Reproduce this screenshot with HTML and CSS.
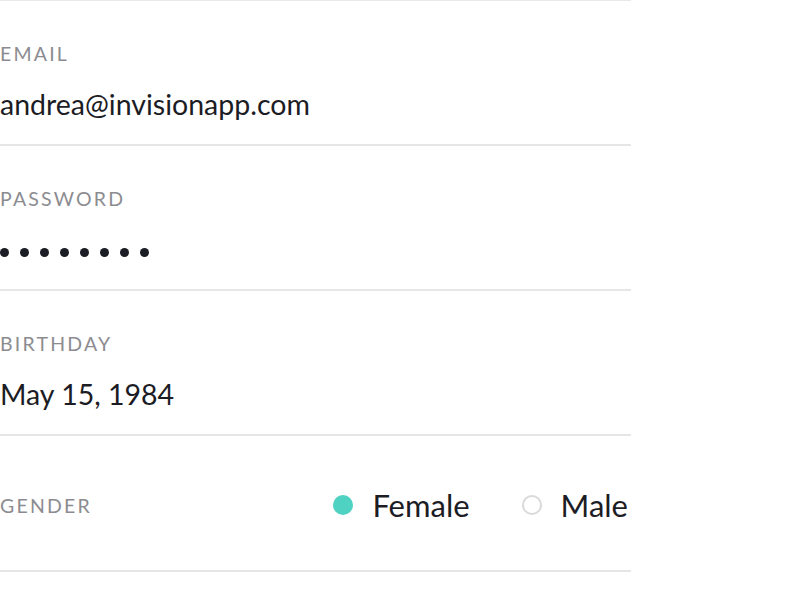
FILE: index.html
```html
<!DOCTYPE html>
<html>
<head>
<meta charset="utf-8">
<link rel="stylesheet" href="styles.css">
</head>
<body>
<div class="form">
  <div class="field">
    <div class="label">EMAIL</div>
    <div class="value">andrea@invisionapp.com</div>
  </div>
  <div class="field">
    <div class="label">PASSWORD</div>
    <div class="dots">
      <span class="dot"></span><span class="dot"></span><span class="dot"></span><span class="dot"></span>
      <span class="dot"></span><span class="dot"></span><span class="dot"></span><span class="dot"></span>
    </div>
  </div>
  <div class="field">
    <div class="label">BIRTHDAY</div>
    <div class="value">May 15, 1984</div>
  </div>
  <div class="field field-row">
    <div class="label">GENDER</div>
    <div class="radios">
      <div class="radio"><span class="bullet on"></span><span class="radio-text">Female</span></div>
      <div class="radio"><span class="bullet"></span><span class="radio-text">Male</span></div>
    </div>
  </div>
</div>
</body>
</html>
```
FILE: styles.css
```css
html, body {
  margin: 0;
  padding: 0;
  background: #fff;
}
body {
  font-family: Lato, "Open Sans", sans-serif;
  color: #1c1c24;
}
.form {
  width: 631px;
  border-top: 1px solid #e8e8e8;
}
.field {
  height: 143px;
  border-bottom: 2px solid #e6e6e6;
}
.label {
  font-size: 19.5px;
  letter-spacing: 2.2px;
  color: #8c8c90;
  padding-top: 41px;
  line-height: 24px;
}
.value {
  font-size: 28.5px;
  line-height: 34px;
  margin-top: 21px;
}
.dots {
  display: flex;
  gap: 11px;
  margin-top: 37px;
}
.dot {
  width: 9px;
  height: 9px;
  border-radius: 50%;
  background: #1c1c24;
}
.field-row {
  height: 134px;
  display: flex;
  align-items: center;
  justify-content: space-between;
}
.field-row .label {
  padding-top: 0;
  margin-top: 5px;
}
.radios {
  display: flex;
  gap: 52px;
  margin-top: 4px;
  margin-right: 3px;
}
.radio {
  display: flex;
  align-items: center;
  gap: 19px;
}
.bullet {
  width: 16px;
  height: 16px;
  border-radius: 50%;
  border: 2px solid #d9d9d9;
}
.bullet.on {
  background: #4fd2c2;
  border-color: #4fd2c2;
}
.radio-text {
  font-size: 31px;
  line-height: 36px;
}
```
